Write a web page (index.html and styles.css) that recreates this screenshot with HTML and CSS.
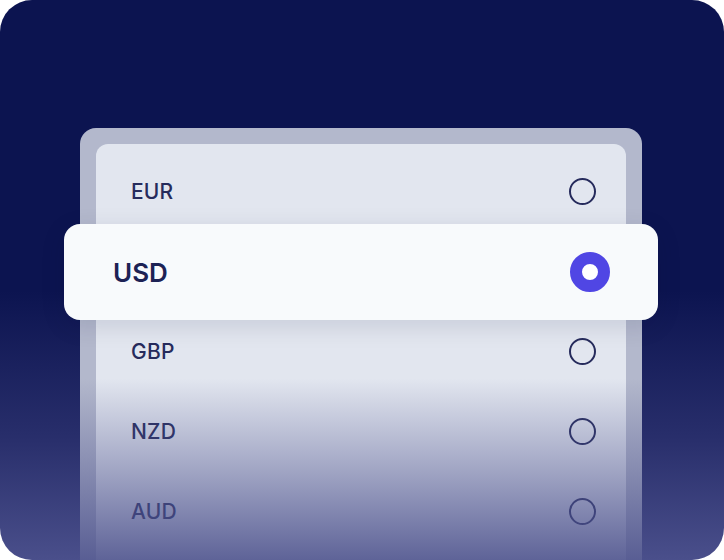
FILE: index.html
```html
<!DOCTYPE html>
<html lang="en">
<head>
<meta charset="utf-8">
<title>Currency</title>
<link rel="stylesheet" href="styles.css">
</head>
<body>
<div class="card">
  <div class="panel">
    <div class="list">
      <div class="row"><span class="code">EUR</span><span class="radio"></span></div>
      <div class="row selected"><span class="code">USD</span><span class="radio on"></span></div>
      <div class="row"><span class="code">GBP</span><span class="radio"></span></div>
      <div class="row"><span class="code">NZD</span><span class="radio"></span></div>
      <div class="row"><span class="code">AUD</span><span class="radio"></span></div>
    </div>
    <div class="fade"></div>
  </div>
</div>
</body>
</html>
```
FILE: styles.css
```css
* { box-sizing: border-box; }
html, body { margin: 0; padding: 0; background: #ffffff; }
body { font-family: Inter, "Noto Sans", sans-serif; }

.card {
  width: 724px;
  height: 560px;
  border-radius: 32px;
  overflow: hidden;
  background: linear-gradient(to bottom, #0c1450 0%, #0c1450 52%, #282e6b 78%, #4a4f8b 100%);
  display: flex;
  justify-content: flex-start;
  padding: 128px 0 0 80px;
}

.panel {
  position: relative;
  width: 562px;
  height: 432px;
  background: #b3b8cc;
  border-radius: 16px 16px 0 0;
  padding: 16px 16px 0;
}

.list {
  height: 100%;
  background: #e2e6ef;
  border-radius: 12px 12px 0 0;
  padding-top: 7px;
}

.row {
  height: 80px;
  display: flex;
  align-items: center;
  justify-content: space-between;
  padding: 0 30px 0 35px;
}

.code {
  font-size: 21px;
  font-weight: 500;
  color: #262b5c;
  letter-spacing: 0.2px;
}

.radio {
  width: 27px;
  height: 27px;
  border-radius: 50%;
  border: 2px solid #262b5c;
}

.row.selected {
  position: relative;
  z-index: 2;
  height: 96px;
  margin: -7px -32px -9px -32px;
  padding: 0 48px 0 49px;
  background: #f8fafc;
  border-radius: 16px;
  box-shadow: 0 6px 24px rgba(10, 16, 60, 0.12);
}

.row.selected .code {
  font-size: 26px;
  font-weight: 600;
  color: #1d2255;
  letter-spacing: 0;
}

.radio.on {
  width: 40px;
  height: 40px;
  border: 12px solid #5046e4;
  background: #ffffff;
}

.fade {
  position: absolute;
  left: 0;
  right: 0;
  top: 0;
  bottom: 0;
  border-radius: 16px 16px 0 0;
  pointer-events: none;
  background: linear-gradient(to bottom, rgba(76, 81, 140, 0) 0%, rgba(76, 81, 140, 0) 58%, rgba(76, 81, 140, 0.45) 80%, rgba(76, 81, 140, 0.88) 100%);
}
```
